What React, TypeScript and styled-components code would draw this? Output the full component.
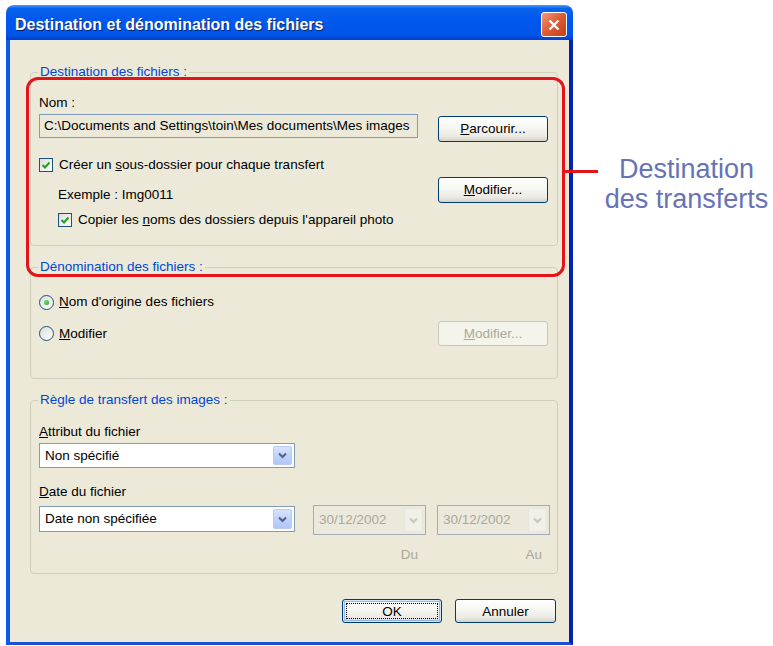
import styled, { createGlobalStyle } from "styled-components";

const GlobalStyle = createGlobalStyle`
  html, body {
    margin: 0;
    background: #ffffff;
  }
  body {
    font-family: "Liberation Sans", Arial, sans-serif;
  }
`;

const Page = styled.div`
  display: flex;
  align-items: flex-start;
  box-sizing: border-box;
  width: 773px;
  height: 646px;
  padding: 5px 0 0 6px;
`;

const Window = styled.div`
  position: relative;
  width: 567px;
  height: 640px;
  display: flex;
  flex-direction: column;
  border-radius: 8px 8px 0 0;
  overflow: hidden;
`;

const TitleBar = styled.div`
  height: 35px;
  box-sizing: border-box;
  padding: 4px 6px 0 9px;
  display: flex;
  align-items: center;
  justify-content: space-between;
  background: linear-gradient(
    #4a9bff 0%,
    #0a63ec 10%,
    #0058ee 40%,
    #0055e8 85%,
    #003fd0 100%
  );
`;

const Title = styled.span`
  color: #ffffff;
  font-weight: bold;
  font-size: 16px;
  text-shadow: 1px 1px 0 #0a246a;
`;

const CloseButton = styled.div`
  width: 26px;
  height: 25px;
  box-sizing: border-box;
  border: 1px solid #ffffff;
  border-radius: 3px;
  display: flex;
  align-items: center;
  justify-content: center;
  background: linear-gradient(135deg, #f29a79 0%, #dd5a30 50%, #c2401b 100%);
`;

const Client = styled.div`
  flex: 1;
  box-sizing: border-box;
  background: #ece9d8;
  border-left: 4px solid #0c5be6;
  border-right: 4px solid #0024ab;
  border-bottom: 3px solid #1c4fcf;
  padding: 32px 11px 0 20px;
  display: flex;
  flex-direction: column;
  font-size: 13.5px;
  color: #000000;
`;

const Group = styled.div<{ $h: number; $mt: number }>`
  position: relative;
  box-sizing: border-box;
  height: ${(p) => p.$h}px;
  margin-top: ${(p) => p.$mt}px;
  border: 1px solid #d0d0bf;
  border-radius: 4px;
  padding: 0 9px 0 8px;
  display: flex;
  flex-direction: column;
`;

const Legend = styled.span`
  position: absolute;
  top: -9px;
  left: 7px;
  padding: 0 2px;
  line-height: 16px;
  background: #ece9d8;
  color: #0046d5;
`;

const Row = styled.div<{
  $mt: number;
  $h: number;
  $indent?: number;
  $align?: string;
  $justify?: string;
}>`
  display: flex;
  align-items: ${(p) => p.$align ?? "center"};
  justify-content: ${(p) => p.$justify ?? "flex-start"};
  margin-top: ${(p) => p.$mt}px;
  height: ${(p) => p.$h}px;
  padding-left: ${(p) => p.$indent ?? 0}px;
  line-height: 16px;
  white-space: nowrap;
`;

const Label = styled.span<{ $disabled?: boolean }>`
  line-height: 16px;
  color: ${(p) => (p.$disabled ? "#aca899" : "#000000")};
`;

const TextField = styled.div`
  width: 379px;
  height: 24px;
  box-sizing: border-box;
  border: 1px solid #7f9db9;
  background: #ece9d8;
  padding-left: 4px;
  display: flex;
  align-items: center;
  overflow: hidden;
`;

const Button = styled.div<{
  $w: number;
  $h: number;
  $mt?: number;
  $disabled?: boolean;
  $default?: boolean;
}>`
  position: relative;
  width: ${(p) => p.$w}px;
  height: ${(p) => p.$h}px;
  margin-top: ${(p) => p.$mt ?? 0}px;
  box-sizing: border-box;
  border: 1px solid ${(p) => (p.$disabled ? "#c9c7ba" : "#003c74")};
  border-radius: 3px;
  display: flex;
  align-items: center;
  justify-content: center;
  color: ${(p) => (p.$disabled ? "#aca899" : "#000000")};
  background: ${(p) =>
    p.$disabled
      ? "#f5f4ea"
      : "linear-gradient(#ffffff 0%, #f6f6f2 45%, #ebeae3 80%, #d6d2c6 100%)"};
  box-shadow: ${(p) =>
    p.$default ? "inset 0 0 0 1px #cee7ff, inset 0 0 0 2px #98b8ea" : "none"};

  &::after {
    content: "";
    display: ${(p) => (p.$default ? "block" : "none")};
    position: absolute;
    inset: 3px;
    border: 1px dotted #000000;
  }
`;

const Box = styled.div`
  width: 14px;
  height: 14px;
  box-sizing: border-box;
  border: 1px solid #1c5180;
  background: linear-gradient(135deg, #dcdcd7 0%, #ffffff 100%);
  display: flex;
  align-items: center;
  justify-content: center;
  margin-right: 6px;
  flex-shrink: 0;
`;

const Radio = styled.div<{ $checked?: boolean }>`
  width: 15px;
  height: 15px;
  box-sizing: border-box;
  border: 1px solid #1c5180;
  border-radius: 50%;
  background: linear-gradient(135deg, #dcdcd7 0%, #ffffff 100%);
  display: flex;
  align-items: center;
  justify-content: center;
  margin-right: 5px;
  flex-shrink: 0;

  &::after {
    content: "";
    display: ${(p) => (p.$checked ? "block" : "none")};
    width: 5px;
    height: 5px;
    border-radius: 50%;
    background: radial-gradient(circle at 35% 35%, #6fe56f, #21a121);
  }
`;

const Select = styled.div<{ $w: number; $h: number; $mt?: number; $disabled?: boolean }>`
  width: ${(p) => p.$w}px;
  height: ${(p) => p.$h}px;
  margin-top: ${(p) => p.$mt ?? 0}px;
  box-sizing: border-box;
  border: 1px solid ${(p) => (p.$disabled ? "#a5acb5" : "#7f9db9")};
  background: ${(p) => (p.$disabled ? "#ebe9dc" : "#ffffff")};
  color: ${(p) => (p.$disabled ? "#aca899" : "#000000")};
  display: flex;
  align-items: center;
  justify-content: space-between;
  padding: 2px 2px 2px 5px;
  flex-shrink: 0;
`;

const DropButton = styled.div<{ $disabled?: boolean }>`
  width: 19px;
  align-self: stretch;
  border-radius: 2px;
  display: flex;
  align-items: center;
  justify-content: center;
  background: ${(p) =>
    p.$disabled
      ? "#f0efe8"
      : "linear-gradient(#d6e3fd 0%, #c1d3fb 50%, #b1c6f7 100%)"};
  border: 1px solid ${(p) => (p.$disabled ? "#e8e6dc" : "#b9cbf3")};
  box-sizing: border-box;
`;

const Cell = styled.div<{ $w: number }>`
  width: ${(p) => p.$w}px;
  box-sizing: border-box;
  padding-right: 8px;
  text-align: right;
  color: #aca899;
  flex-shrink: 0;
`;

const Footer = styled.div`
  display: flex;
  justify-content: flex-end;
  gap: 13px;
  margin: 25px 2px 0 0;
`;

const Highlight = styled.div`
  position: absolute;
  left: 20px;
  top: 72px;
  width: 539px;
  height: 200px;
  box-sizing: border-box;
  border: 3px solid #e3151a;
  border-radius: 12px;
  pointer-events: none;
`;

const Annotation = styled.div`
  position: relative;
  margin: 149px 0 0 30px;
  width: 167px;
  text-align: center;
  font-size: 27px;
  line-height: 30px;
  color: #6673b6;
  white-space: nowrap;
`;

const Connector = styled.div`
  position: absolute;
  left: -38px;
  top: 16px;
  width: 33px;
  height: 3px;
  background: #e3151a;
`;

const Check = () => (
  <svg width="10" height="10" viewBox="0 0 10 10">
    <path d="M1.5 5 L4 7.5 L8.5 2.5" fill="none" stroke="#21a121" strokeWidth="2" />
  </svg>
);

const Chevron = ({ disabled }: { disabled?: boolean }) => (
  <svg width="9" height="7" viewBox="0 0 9 7">
    <path
      d="M1 1.5 L4.5 5 L8 1.5"
      fill="none"
      stroke={disabled ? "#c9c7ba" : "#4d6185"}
      strokeWidth="2"
    />
  </svg>
);

export default function App() {
  return (
    <>
      <GlobalStyle />
      <Page>
        <Window>
          <TitleBar>
            <Title>Destination et dénomination des fichiers</Title>
            <CloseButton>
              <svg width="12" height="12" viewBox="0 0 12 12">
                <path d="M1.5 1.5 L10.5 10.5 M10.5 1.5 L1.5 10.5" stroke="#ffffff" strokeWidth="2.4" />
              </svg>
            </CloseButton>
          </TitleBar>
          <Client>
            <Group $h={174} $mt={0}>
              <Legend>Destination des fichiers :</Legend>
              <Row $mt={22} $h={16}>
                <Label>Nom :</Label>
              </Row>
              <Row $mt={3} $h={28} $align="flex-start" $justify="space-between">
                <TextField>{"C:\\Documents and Settings\\toin\\Mes documents\\Mes images"}</TextField>
                <Button $w={110} $h={26} $mt={2}>
                  <span>
                    <u>P</u>arcourir...
                  </span>
                </Button>
              </Row>
              <Row $mt={15} $h={16}>
                <Box>
                  <Check />
                </Box>
                <Label>
                  Créer un <u>s</u>ous-dossier pour chaque transfert
                </Label>
              </Row>
              <Row $mt={4} $h={26} $indent={19} $align="flex-end" $justify="space-between">
                <Label>Exemple : Img0011</Label>
                <Button $w={110} $h={26}>
                  <span>
                    <u>M</u>odifier...
                  </span>
                </Button>
              </Row>
              <Row $mt={9} $h={16} $indent={19}>
                <Box>
                  <Check />
                </Box>
                <Label>
                  Copier les <u>n</u>oms des dossiers depuis l'appareil photo
                </Label>
              </Row>
            </Group>

            <Group $h={112} $mt={21}>
              <Legend>Dénomination des fichiers :</Legend>
              <Row $mt={26} $h={16}>
                <Radio $checked />
                <Label>
                  <u>N</u>om d'origine des fichiers
                </Label>
              </Row>
              <Row $mt={11} $h={25} $justify="space-between">
                <Row $mt={0} $h={16}>
                  <Radio />
                  <Label>
                    <u>M</u>odifier
                  </Label>
                </Row>
                <Button $w={110} $h={25} $disabled>
                  <span>
                    <u>M</u>odifier...
                  </span>
                </Button>
              </Row>
            </Group>

            <Group $h={174} $mt={21}>
              <Legend>Règle de transfert des images :</Legend>
              <Row $mt={23} $h={16}>
                <Label>
                  <u>A</u>ttribut du fichier
                </Label>
              </Row>
              <Row $mt={3} $h={25}>
                <Select $w={256} $h={25}>
                  <span>Non spécifié</span>
                  <DropButton>
                    <Chevron />
                  </DropButton>
                </Select>
              </Row>
              <Row $mt={16} $h={16}>
                <Label>
                  <u>D</u>ate du fichier
                </Label>
              </Row>
              <Row $mt={5} $h={30} $align="flex-start">
                <Select $w={256} $h={26} $mt={1}>
                  <span>Date non spécifiée</span>
                  <DropButton>
                    <Chevron />
                  </DropButton>
                </Select>
                <Select $w={113} $h={30} $disabled style={{ marginLeft: 18 }}>
                  <span>30/12/2002</span>
                  <DropButton $disabled>
                    <Chevron disabled />
                  </DropButton>
                </Select>
                <Select $w={113} $h={30} $disabled style={{ marginLeft: 11 }}>
                  <span>30/12/2002</span>
                  <DropButton $disabled>
                    <Chevron disabled />
                  </DropButton>
                </Select>
              </Row>
              <Row $mt={12} $h={16} $indent={274}>
                <Cell $w={113}>Du</Cell>
                <Cell $w={124}>Au</Cell>
              </Row>
            </Group>

            <Footer>
              <Button $w={100} $h={24} $default>
                OK
              </Button>
              <Button $w={101} $h={24}>
                Annuler
              </Button>
            </Footer>
          </Client>
          <Highlight />
        </Window>
        <Annotation>
          <Connector />
          Destination
          <br />
          des transferts
        </Annotation>
      </Page>
    </>
  );
}
